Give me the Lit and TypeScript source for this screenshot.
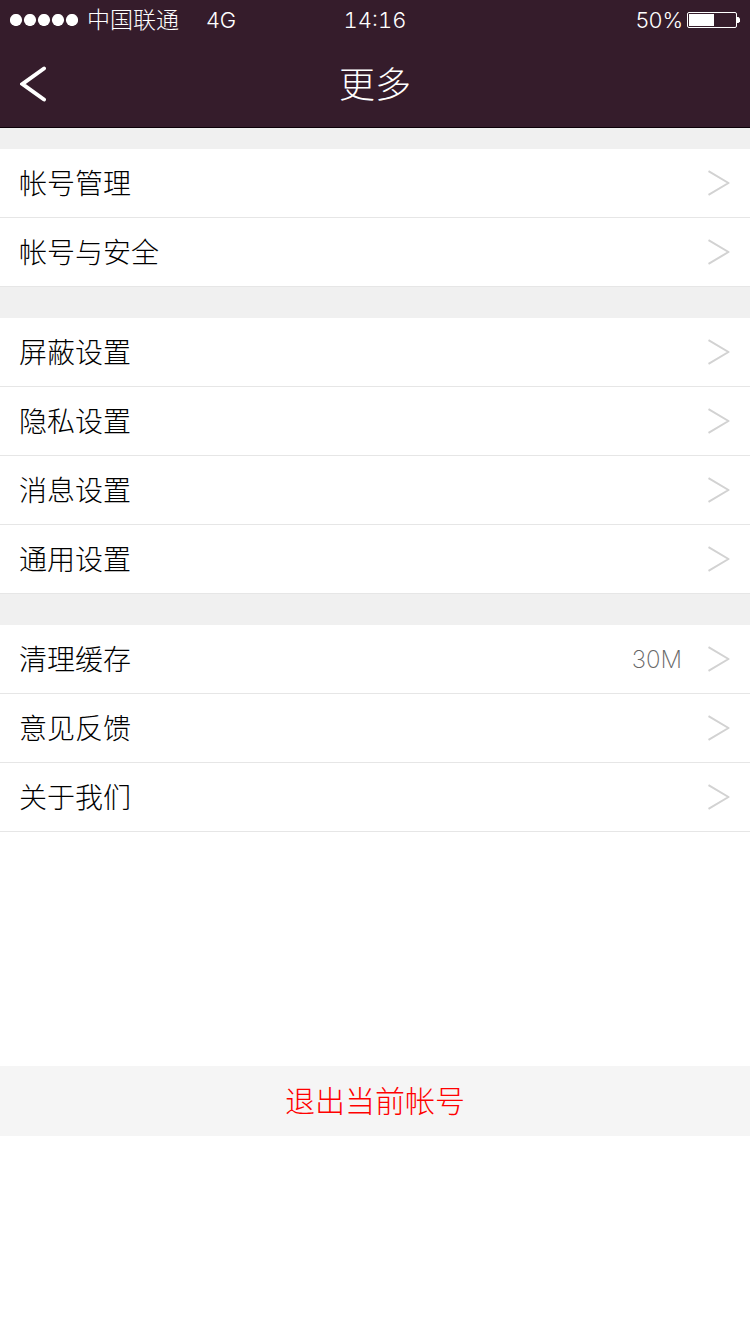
import { LitElement, html, css, svg, nothing } from "lit";
import { customElement, property } from "lit/decorators.js";

interface Item {
  label: string;
  value?: string;
}

const GROUPS: Item[][] = [
  [{ label: "帐号管理" }, { label: "帐号与安全" }],
  [{ label: "屏蔽设置" }, { label: "隐私设置" }, { label: "消息设置" }, { label: "通用设置" }],
  [{ label: "清理缓存", value: "30M" }, { label: "意见反馈" }, { label: "关于我们" }],
];

@customElement("status-bar")
export class StatusBar extends LitElement {
  static styles = css`
    :host {
      display: grid;
      grid-template-columns: 1fr auto 1fr;
      align-items: center;
      height: 40px;
      padding: 0 10px;
      font-size: 22px;
      line-height: 32px;
    }
    .left,
    .right {
      display: flex;
      align-items: center;
    }
    .right {
      justify-content: flex-end;
      gap: 4px;
    }
    .carrier {
      font-size: 23px;
      margin: 0 27px 0 9px;
    }
    .time {
      font-variant-numeric: tabular-nums;
    }
    svg {
      display: block;
    }
  `;

  render() {
    return html`
      <div class="left">
        <svg width="68" height="12" viewBox="0 0 68 12" fill="#fff" aria-hidden="true">
          ${[6, 20, 34, 48, 62].map((x) => svg`<circle cx=${x} cy="6" r="6.1" />`)}
        </svg>
        <span class="carrier">中国联通</span>
        <span>4G</span>
      </div>
      <span class="time">14:16</span>
      <div class="right">
        <span>50%</span>
        <svg width="53" height="16" viewBox="0 0 53 16" aria-hidden="true">
          <rect x="0.5" y="0.5" width="49" height="15" rx="1.5" fill="none" stroke="#fff" />
          <rect x="2" y="2" width="25" height="12" fill="#fff" />
          <path d="M50 5h1.5l1.5 1.500v3l-1.500 1.500H50z" fill="#fff" />
        </svg>
      </div>
    `;
  }
}

@customElement("settings-row")
export class SettingsRow extends LitElement {
  @property() label = "";
  @property() value = "";

  static styles = css`
    :host {
      display: block;
    }
    .row {
      box-sizing: border-box;
      display: flex;
      align-items: center;
      height: 69px;
      padding: 0 20px 0 19px;
      border-bottom: 1px solid #e6e6e6;
      background: #fff;
      color: #000;
      font-size: 28px;
      line-height: 40px;
      text-decoration: none;
    }
    .label {
      flex: 1;
      padding-top: 2px;
    }
    .value {
      padding-top: 2px;
      margin-right: 26px;
      color: #666;
      font-size: 24px;
      font-weight: 200;
    }
    svg {
      display: block;
    }
  `;

  render() {
    return html`
      <a class="row" href="#">
        <span class="label">${this.label}</span>
        ${this.value ? html`<span class="value">${this.value}</span>` : nothing}
        <svg width="22" height="26" viewBox="0 0 22 26" fill="none" stroke="#d2d2d2" stroke-width="2" aria-hidden="true">
          <path d="M0.500 1.200L20.500 13L0.500 24.800" stroke-linejoin="round" />
        </svg>
      </a>
    `;
  }
}

@customElement("app-root")
export class AppRoot extends LitElement {
  static styles = css`
    :host {
      display: block;
      min-height: 100vh;
      background: #fff;
      font-family: Inter, "Noto Sans CJK SC", sans-serif;
      font-weight: 300;
    }
    .top {
      background: #351c2b;
      color: #fff;
      border-bottom: 1px solid #0c0008;
    }
    .nav {
      display: grid;
      grid-template-columns: 1fr auto 1fr;
      align-items: center;
      height: 87px;
      padding: 0 20px;
    }
    .back {
      justify-self: start;
      padding: 0;
      border: 0;
      background: none;
      color: inherit;
    }
    .back svg {
      display: block;
    }
    h1 {
      margin: 0;
      padding-top: 2px;
      font-size: 36px;
      line-height: 52px;
      font-weight: 300;
    }
    .groups {
      display: flex;
      flex-direction: column;
      gap: 31px;
      padding-top: 21px;
      background: #f0f0f0;
    }
    .logout {
      display: block;
      width: 100%;
      height: 70px;
      margin-top: 234px;
      padding: 0;
      border: 0;
      background: #f5f5f5;
      color: #f00;
      font: inherit;
      font-size: 30px;
      line-height: 44px;
    }
  `;

  render() {
    return html`
      <header class="top">
        <status-bar></status-bar>
        <div class="nav">
          <button class="back" aria-label="返回">
            <svg width="27" height="36" viewBox="0 0 27 36" fill="none" stroke="#fff" stroke-width="4" stroke-linecap="round" aria-hidden="true">
              <path d="M24 2.500L2.500 18L24 33.500" />
            </svg>
          </button>
          <h1>更多</h1>
        </div>
      </header>
      <main>
        <div class="groups">
          ${GROUPS.map(
            (items) => html`<nav>
              ${items.map(
                (item) => html`<settings-row .label=${item.label} .value=${item.value ?? ""}></settings-row>`,
              )}
            </nav>`,
          )}
        </div>
        <button class="logout">退出当前帐号</button>
      </main>
    `;
  }
}
